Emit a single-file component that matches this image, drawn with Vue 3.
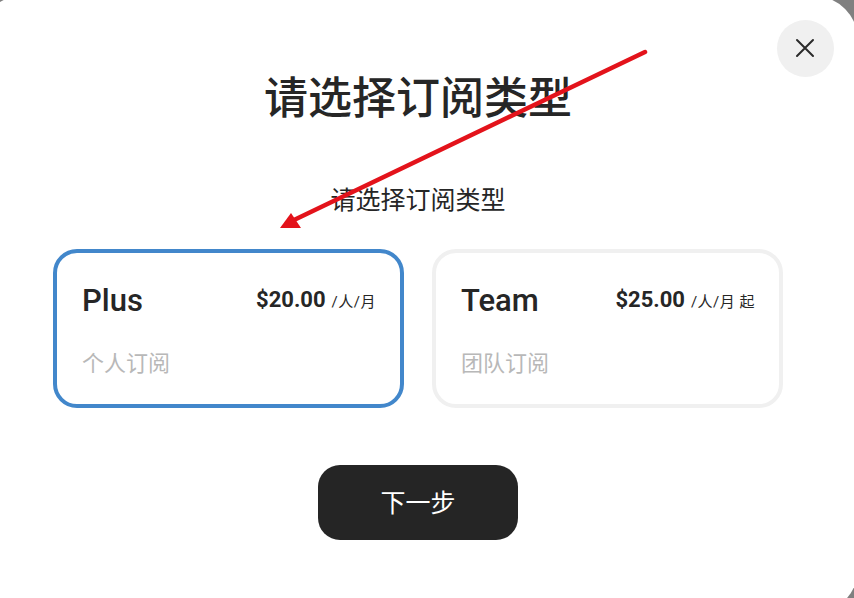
<template>
  <div class="backdrop">
    <section class="modal">
      <button class="close-btn" aria-label="关闭">
        <svg width="20" height="20" viewBox="0 0 20 20">
          <path d="M2 2 L18 18 M18 2 L2 18" stroke="#2b2b2b" stroke-width="2" stroke-linecap="round" fill="none" />
        </svg>
      </button>

      <h1 class="title">请选择订阅类型</h1>
      <p class="subtitle">请选择订阅类型</p>

      <div class="plans">
        <div v-for="plan in plans" :key="plan.name" class="plan-card" :class="{ selected: plan.selected }">
          <div class="plan-head">
            <span class="plan-name">{{ plan.name }}</span>
            <span class="plan-price">
              <strong>{{ plan.price }}</strong>
              <span class="plan-unit">{{ plan.unit }}</span>
            </span>
          </div>
          <div class="plan-desc">{{ plan.desc }}</div>
        </div>
      </div>

      <button class="next-btn">下一步</button>
    </section>

    <!-- red annotation arrow drawn over the dialog -->
    <svg class="arrow" width="854" height="598" viewBox="0 0 854 598">
      <path d="M645 52 L294 220" stroke="#e3131b" stroke-width="4.5" stroke-linecap="round" fill="none" />
      <path d="M280 228 L291 213 L301 228 Z" fill="#e3131b" />
    </svg>
  </div>
</template>

<script setup>
const plans = [
  { name: 'Plus', price: '$20.00', unit: '/人/月', desc: '个人订阅', selected: true },
  { name: 'Team', price: '$25.00', unit: '/人/月 起', desc: '团队订阅', selected: false }
]
</script>

<style>
html, body {
  margin: 0;
  background: #808080;
}
</style>

<style scoped>
.backdrop {
  position: relative;
  width: 854px;
  height: 598px;
  overflow: hidden;
  background: #808080;
  font-family: Roboto, "Noto Sans CJK SC", sans-serif;
}

.modal {
  position: absolute;
  left: -22px;
  top: -4px;
  width: 880px;
  height: 617px;
  box-sizing: border-box;
  padding-top: 73px;
  border-radius: 44px;
  background: #fff;
  display: flex;
  flex-direction: column;
  align-items: center;
  color: #262626;
}

.close-btn {
  position: absolute;
  top: 24px;
  right: 24px;
  width: 57px;
  height: 57px;
  padding: 0;
  border: none;
  border-radius: 50%;
  background: #f0f0f0;
  display: flex;
  align-items: center;
  justify-content: center;
}

.close-btn svg {
  margin-top: -2px;
  margin-left: -1px;
}

.title {
  margin: 0;
  font-size: 44px;
  line-height: 60px;
  font-weight: 500;
}

.subtitle {
  margin: 54px 0 0;
  font-size: 25px;
  line-height: 36px;
  font-weight: 400;
}

.plans {
  display: flex;
  gap: 28px;
  margin-top: 30px;
}

.plan-card {
  width: 351px;
  height: 159px;
  box-sizing: border-box;
  padding: 29px 24px 0 25px;
  border: 4px solid #f0f0f0;
  border-radius: 24px;
}

.plan-card.selected {
  border-color: #4287cb;
}

.plan-head {
  display: flex;
  align-items: center;
  justify-content: space-between;
  height: 36px;
}

.plan-name {
  font-size: 31px;
  font-weight: 500;
}

.plan-price {
  margin-top: -2px;
}

.plan-price strong {
  font-size: 22px;
  font-weight: 700;
}

.plan-unit {
  margin-left: 6px;
  font-size: 15px;
  letter-spacing: 0.5px;
}

.plan-desc {
  margin-top: 31px;
  font-size: 22px;
  line-height: 30px;
  color: #b8b8b8;
}

.next-btn {
  margin-top: 57px;
  width: 200px;
  height: 75px;
  padding: 0 0 3px;
  border: none;
  border-radius: 22px;
  background: #252525;
  color: #fff;
  font-family: inherit;
  font-size: 25px;
}

.arrow {
  position: absolute;
  left: 0;
  top: 0;
  pointer-events: none;
}
</style>
